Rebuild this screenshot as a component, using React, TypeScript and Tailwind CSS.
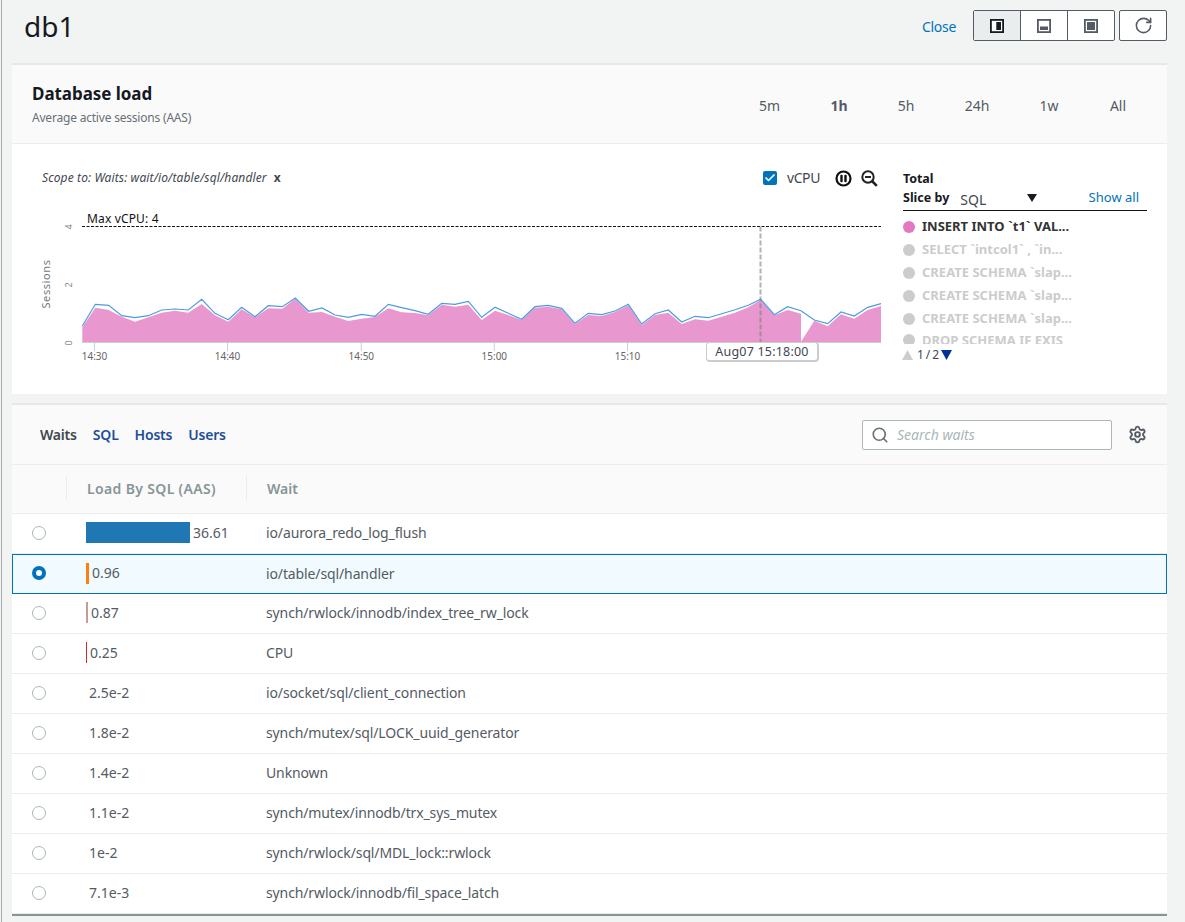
import { RotateCw, Search, Settings, Check } from "lucide-react";

const xs3 = [247,286,326,365,405,445,485,525,565,605,645,685,725,765,805,847,886,926,966,1005,1045,1085,1125,1165,1205,1245,1285,1325];
const blue3 = [378,313,316,347,353,347,330,327,330,298,340,359,322,350,317,320,294,334,324,345,352,343,349,313,323,332,343,310];
const pink3 = [382,323,330,350,365,352,338,332,338,312,346,365,328,352,325,326,296,338,336,350,363,356,351,325,337,339,346,314];
const xs4 = [45,85,125,165,205,245,285,325,365,405,445,485,525,565,605,645,685,725,765,805,845,885,925,962,1003,1043,1083];
const blue4 = [313,304,352,322,340,358,320,316,325,370,340,344,333,313,372,341,330,366,349,353,341,329,316,298,344,320,332];
const pink4 = [320,314,360,332,345,360,323,320,328,372,345,348,336,316,375,345,338,372,358,362,350,338,322,300,346,330,341];
const xsEnd = [1123,1163,1203,1243,1283,1323];
const blueEnd = [360,371,336,348,322,311];
const pinkEnd = [362,379,343,356,330,318];

const p3 = (x: number, y: number) => `${(x / 3).toFixed(1)},${(200 + y / 3).toFixed(1)}`;
const p4 = (x: number, y: number) => `${(440 + x / 3).toFixed(1)},${(200 + y / 3).toFixed(1)}`;

const bluePts = [
  ...xs3.map((x, i) => p3(x, blue3[i])),
  ...xs4.map((x, i) => p4(x, blue4[i])),
  ...xsEnd.map((x, i) => p4(x, blueEnd[i])),
].join(" ");
const pinkPts = [
  "82.3,342.3",
  ...xs3.map((x, i) => p3(x, pink3[i])),
  ...xs4.map((x, i) => p4(x, pink4[i])),
  p4(1083, 425),
  ...xsEnd.map((x, i) => p4(x, pinkEnd[i])),
  "881,342.3",
].join(" ");

const ticks = [
  [94.5, "14:30"],
  [227.5, "14:40"],
  [361.3, "14:50"],
  [494.3, "15:00"],
  [627.5, "15:10"],
] as const;

const rows = [
  { v: "36.61", w: "w-[104px]", c: "bg-[#1f77b4]", t: "io/aurora_redo_log_flush" },
  { v: "0.96", w: "w-[3px]", c: "bg-[#ff7f0e]", t: "io/table/sql/handler", sel: true },
  { v: "0.87", w: "w-[2px]", c: "bg-[#c49c94]", t: "synch/rwlock/innodb/index_tree_rw_lock" },
  { v: "0.25", w: "w-[1px]", c: "bg-[#d62728]", t: "CPU" },
  { v: "2.5e-2", w: "w-0", c: "", t: "io/socket/sql/client_connection" },
  { v: "1.8e-2", w: "w-0", c: "", t: "synch/mutex/sql/LOCK_uuid_generator" },
  { v: "1.4e-2", w: "w-0", c: "", t: "Unknown" },
  { v: "1.1e-2", w: "w-0", c: "", t: "synch/mutex/innodb/trx_sys_mutex" },
  { v: "1e-2", w: "w-0", c: "", t: "synch/rwlock/sql/MDL_lock::rwlock" },
  { v: "7.1e-3", w: "w-0", c: "", t: "synch/rwlock/innodb/fil_space_latch" },
];

const legend = [
  { t: "INSERT INTO `t1` VAL...", on: true },
  { t: "SELECT `intcol1` , `in..." },
  { t: "CREATE SCHEMA `slap..." },
  { t: "CREATE SCHEMA `slap..." },
  { t: "CREATE SCHEMA `slap..." },
];

const font = { fontFamily: "'Noto Sans', sans-serif" };

function PanelIcon({ dark, kind }: { dark?: boolean; kind: "side" | "bottom" | "full" }) {
  const color = dark ? "#16191f" : "#545b64";
  return (
    <svg width="14" height="14" viewBox="0 0 14 14">
      <rect x="0.9" y="0.9" width="12.2" height="12.2" fill="#fff" stroke={color} strokeWidth="1.8" />
      {kind === "side" && <rect x="6.3" y="3" width="4.7" height="8" fill={color} />}
      {kind === "bottom" && <rect x="3" y="7.5" width="8" height="3.5" fill={color} />}
      {kind === "full" && <rect x="3" y="3" width="8" height="8" fill={color} />}
    </svg>
  );
}

export default function App() {
  return (
    <div className="w-[1185px] h-[922px] overflow-hidden bg-[#f2f3f3] pl-px text-[#545b64]" style={font}>
      <div className="h-full border-l border-[#a9a9a9] pl-[10px] pr-[18px]">
        <header className="h-[63px] flex items-start">
          <h1 className="ml-[12px] mt-[8px] text-[28px] leading-[36px] text-[#16191f]">db1</h1>
          <a className="ml-auto mt-[17px] text-[14px] leading-[20px] text-[#0073bb] tracking-[-0.3px]">Close</a>
          <div className="ml-[17px] mt-[10px] flex h-[31px] w-[142px] rounded-[2px] border border-[#545b64] bg-white">
            <div className="flex-1 flex items-center justify-center bg-[#eaeded] border-r border-[#545b64]"><PanelIcon dark kind="side" /></div>
            <div className="flex-1 flex items-center justify-center border-r border-[#545b64]"><PanelIcon kind="bottom" /></div>
            <div className="flex-1 flex items-center justify-center"><PanelIcon kind="full" /></div>
          </div>
          <div className="ml-[4px] mt-[10px] flex h-[31px] w-[48px] items-center justify-center rounded-[2px] border border-[#545b64] bg-white">
            <RotateCw size={19} strokeWidth={2} className="text-[#545b64]" />
          </div>
        </header>

        <section className="border-t-2 border-[#e6e8e8]">
          <div className="h-[79px] bg-[#fafafa] border-b border-[#eaeded] flex items-start">
            <div className="ml-[20px] mt-[17px]">
              <h2 className="text-[17px] leading-[24px] font-bold text-[#16191f] tracking-[-0.05px]">Database load</h2>
              <p className="text-[12px] leading-[16px] mt-[4px] text-[#687078] tracking-[-0.2px]">Average active sessions (AAS)</p>
            </div>
            <div className="ml-auto mt-[31px] mr-[39px] flex text-[14px] leading-[20px] text-[#545b64]">
              <span className="w-[20px] mr-[50px] text-center">5m</span>
              <span className="w-[20px] mr-[47px] text-center font-bold">1h</span>
              <span className="w-[20px] mr-[48px] text-center">5h</span>
              <span className="w-[26px] mr-[49px] text-center">24h</span>
              <span className="w-[20px] mr-[49px] text-center">1w</span>
              <span className="w-[20px] text-center">All</span>
            </div>
          </div>

          <div className="h-[250px] bg-white flex">
            <div className="relative w-[891px]">
              <div className="flex items-center h-[20px] mt-[24px]">
                <span className="ml-[30px] text-[12px] italic text-[#414750] tracking-[0.12px]">Scope to: Waits: wait/io/table/sql/handler</span>
                <span className="ml-[7px] text-[12px] font-bold text-[#414750]">x</span>
                <span className="ml-auto flex h-[14px] w-[14px] items-center justify-center rounded-[2px] bg-[#0073bb]">
                  <Check size={12} strokeWidth={3.5} className="text-white" />
                </span>
                <span className="ml-[10px] text-[14px] leading-[20px] text-[#414750] tracking-[-0.4px]">vCPU</span>
                <svg className="ml-[15px]" width="17" height="17" viewBox="0 0 17 17">
                  <circle cx="8.5" cy="8.5" r="7" fill="none" stroke="#111" strokeWidth="2.2" />
                  <rect x="5.3" y="4.8" width="2.4" height="7.4" rx="1" fill="#111" />
                  <rect x="9.3" y="4.8" width="2.4" height="7.4" rx="1" fill="#111" />
                </svg>
                <svg className="ml-[9px] mr-[25px]" width="17" height="17" viewBox="0 0 17 17">
                  <circle cx="7" cy="7" r="5.7" fill="none" stroke="#222" strokeWidth="2" />
                  <path d="M4 7h6" stroke="#222" strokeWidth="2" />
                  <path d="M11 11l4.8 4.8" stroke="#222" strokeWidth="2.6" />
                </svg>
              </div>
              <svg className="block mt-[17px]" width="878" height="175" viewBox="12 205 878 175" style={font}>
                <text x="87" y="222.5" fontSize="12" fill="#111" letterSpacing="0.15">Max vCPU: 4</text>
                <polygon points={pinkPts} fill="#e998cf" />
                <polyline points={bluePts} fill="none" stroke="#4b9ce0" strokeWidth="1.2" />
                <line x1="82" x2="881" y1="226.5" y2="226.5" stroke="#111" strokeWidth="1" strokeDasharray="3 1.5" />
                <line x1="82" x2="881" y1="342.5" y2="342.5" stroke="#c0d0e0" strokeWidth="1" />
                {ticks.map(([x, label]) => (
                  <g key={label}>
                    <line x1={x} x2={x} y1="342" y2="351" stroke="#c0d0e0" strokeWidth="1" />
                    <text x={x} y="360" fontSize="10" fill="#666" textAnchor="middle">{label}</text>
                  </g>
                ))}
                <line x1="760.5" x2="760.5" y1="226.5" y2="342" stroke="#80808099" strokeWidth="2" strokeDasharray="5 2" />
                <text transform="translate(50 284) rotate(-90)" fontSize="11" fill="#777" textAnchor="middle" letterSpacing="0.6">Sessions</text>
                <text transform="translate(72 343) rotate(-90)" fontSize="9" fill="#888" textAnchor="middle">0</text>
                <text transform="translate(72 285) rotate(-90)" fontSize="9" fill="#888" textAnchor="middle">2</text>
                <text transform="translate(72 227) rotate(-90)" fontSize="9" fill="#888" textAnchor="middle">4</text>
              </svg>
              <div className="absolute left-[694px] top-[198px] h-[20px] w-[113px] rounded-[4px] border border-[#ccc] border-r-2 border-b-2 bg-white text-center text-[12.5px] leading-[17px] text-[#414750] tracking-[0.2px]">
                Aug07 15:18:00
              </div>
            </div>

            <div className="w-[244px] pt-[27px]">
              <div className="text-[12.5px] leading-[16px] font-bold text-[#16191f] tracking-[-0.1px]">Total</div>
              <div className="relative mt-[1px] h-[23px] border-b border-[#111] flex items-start">
                <span className="text-[12.5px] leading-[20px] font-bold text-[#16191f]">Slice by</span>
                <span className="ml-[11px] text-[14px] leading-[23px] text-[#414750]">SQL</span>
                <svg className="ml-[41px] mt-[6px]" width="10" height="8" viewBox="0 0 10 8"><path d="M0 0h10L5 8z" fill="#16191f" /></svg>
                <a className="ml-auto mr-[8px] text-[13px] leading-[18px] text-[#0073bb]">Show all</a>
              </div>
              <div className="mt-[4px] h-[132px]">
                {legend.map((l, i) => (
                  <div key={i} className="flex h-[23px] items-center">
                    <span className={l.on ? "h-[12px] w-[12px] rounded-full bg-[#e377c2]" : "h-[12px] w-[12px] rounded-full bg-[#cccccc]"} />
                    <span className={l.on ? "ml-[7px] text-[13px] font-bold text-[#333]" : "ml-[7px] text-[13px] font-bold text-[#cccccc]"}>{l.t}</span>
                  </div>
                ))}
                <div className="flex h-[14px] items-start overflow-hidden">
                  <span className="mt-[4px] h-[12px] w-[12px] shrink-0 rounded-full bg-[#cccccc]" />
                  <span className="ml-[7px] text-[13px] leading-[20px] font-bold text-[#cccccc]">DROP SCHEMA IF EXIS</span>
                </div>
              </div>
              <div className="flex items-center h-[16px] text-[12px] text-[#414750]">
                <svg className="-ml-px" width="11" height="10" viewBox="0 0 11 10"><path d="M5.5 0L11 10H0z" fill="#cccccc" /></svg>
                <span className="ml-[4px] tracking-[-0.6px]">1 / 2</span>
                <svg className="ml-[3px]" width="11" height="10" viewBox="0 0 11 10"><path d="M0 0h11L5.5 10z" fill="#003399" /></svg>
              </div>
            </div>
          </div>
        </section>

        <section className="mt-[9px] border-t-2 border-[#e6e8e8]">
          <div className="h-[60px] bg-[#fafafa] border-b border-[#eaeded] flex items-center">
            <div className="ml-[28px] flex gap-[16px] text-[14px] font-semibold tracking-[-0.2px] text-[#1f4f99]">
              <span className="text-[#414750]">Waits</span>
              <span>SQL</span>
              <span>Hosts</span>
              <span>Users</span>
            </div>
            <div className="ml-auto flex h-[30px] w-[250px] items-center rounded-[2px] border border-[#aab7b8] bg-white">
              <Search size={18} strokeWidth={2.2} className="ml-[8px] text-[#687078]" />
              <span className="ml-[8px] text-[14px] italic text-[#aab7b8]">Search waits</span>
            </div>
            <Settings size={19} strokeWidth={2.4} className="ml-[16px] mr-[20px] text-[#545b64]" />
          </div>

          <div className="h-[49px] pb-[2px] bg-[#fafafa] border-b border-[#eaeded] flex items-center text-[14px] font-semibold text-[#879596]">
            <span className="ml-[54px] h-[24px] border-l border-[#eaeded]" />
            <span className="ml-[20px] w-[159px] tracking-[0.35px]">Load By SQL (AAS)</span>
            <span className="h-[24px] border-l border-[#eaeded]" />
            <span className="ml-[20px]">Wait</span>
          </div>

          {rows.map((r) => (
            <div
              key={r.t}
              className={
                r.sel
                  ? "flex h-[40px] pb-[2px] items-center border border-[#0073bb] bg-[#f1faff] text-[14px]"
                  : "flex h-[40px] pb-[2px] items-center border-b border-[#eaeded] bg-white text-[14px]"
              }
            >
              <div className={r.sel ? "w-[73px] shrink-0 pl-[19px]" : "w-[74px] shrink-0 pl-[20px]"}>
                {r.sel ? (
                  <span className="flex h-[14px] w-[14px] items-center justify-center rounded-full bg-[#0073bb]">
                    <span className="h-[6px] w-[6px] rounded-full bg-white" />
                  </span>
                ) : (
                  <span className="block h-[14px] w-[14px] rounded-full border border-[#aab7b8] bg-white" />
                )}
              </div>
              <div className="flex w-[180px] shrink-0 items-center">
                <span className={`h-[21px] ${r.w} ${r.c}`} />
                <span className="ml-[3px] leading-[20px]">{r.v}</span>
              </div>
              <span className="tracking-[-0.12px]">{r.t}</span>
            </div>
          ))}
          <div className="h-[2px] bg-[#879596]" />
        </section>
      </div>
    </div>
  );
}
